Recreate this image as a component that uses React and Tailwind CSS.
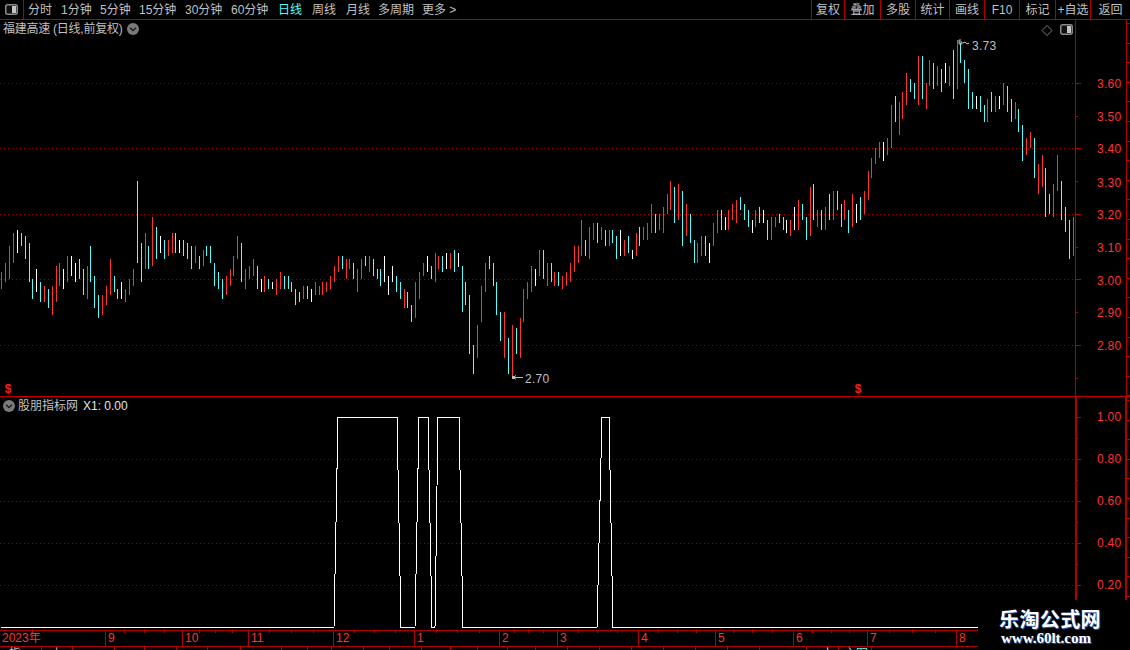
import React from 'react';

const RED = '#ff3232';
const CYAN = '#54fcfc';
const LINE = '#b00000';
const GRID = '#a00000';
const MUTED = '#c0c0c0';

// Bars per crop: [x, top, bottom, colour], in 3x coords from the origin given
const barSets = [
  { ox: 0, oy: 170, rows: [
    [4,306,357,'r'],[16,279,336,'r'],[28,228,327,'r'],[40,189,279,'r'],[52,180,249,'w'],[64,189,228,'c'],[76,198,267,'c'],[88,219,336,'c'],[97,327,387,'c'],[109,297,366,'w'],
    [121,336,396,'c'],[133,348,396,'r'],[145,357,414,'c'],[157,348,435,'r'],[169,288,396,'r'],[178,279,348,'r'],[190,297,357,'w'],[202,258,336,'r'],[214,258,318,'w'],[226,279,336,'w'],
    [238,267,327,'c'],[250,297,375,'c'],[262,288,387,'r'],[271,228,336,'c'],[283,318,414,'c'],[295,375,444,'c'],[307,375,435,'r'],[319,348,405,'r'],[331,267,375,'r'],[343,318,366,'c'],
    [352,357,387,'c'],[364,336,387,'w'],[376,357,396,'r'],[388,327,375,'r'],[400,297,348,'r'],[412,33,279,'c'],[424,219,336,'c'],[436,189,297,'r'],[445,228,297,'c'],[457,141,288,'r'],
    [469,171,267,'c'],[481,198,249,'w'],[493,210,267,'c'],[505,210,258,'r'],[517,189,249,'r'],[526,189,249,'c'],[538,210,249,'w'],[550,210,258,'c'],[562,219,267,'c'],[574,228,297,'c'],
    [586,228,279,'r'],[598,258,297,'c'],[610,240,288,'r'],[619,228,258,'c'],[631,228,279,'c'],[643,279,348,'c'],[655,306,357,'c'],[667,327,387,'c'],[679,318,375,'r'],[691,297,348,'r'],
    [700,258,318,'r'],[712,198,267,'r'],[724,219,336,'c'],[736,297,357,'r'],[748,288,327,'r'],[760,267,318,'r'],[772,288,357,'c'],[784,327,366,'w'],[793,318,366,'r'],[805,327,357,'c'],
    [817,336,357,'w'],[829,327,375,'r'],
  ] },
  { ox: 280, oy: 170, rows: [
    [1,306,357,'r'],[13,318,357,'c'],[25,318,357,'c'],[34,336,366,'c'],[46,357,405,'c'],[58,366,396,'c'],[70,348,387,'r'],[82,348,387,'c'],[94,357,396,'w'],[106,336,375,'r'],
    [118,348,375,'r'],[127,336,375,'r'],[139,336,366,'r'],[151,318,357,'r'],[163,288,336,'r'],[175,258,306,'r'],[187,258,297,'c'],[199,267,327,'r'],[208,267,297,'r'],[220,279,327,'c'],
    [232,297,366,'r'],[244,267,327,'r'],[256,258,288,'c'],[268,258,306,'r'],[280,267,318,'c'],[292,297,327,'c'],[301,297,348,'c'],[313,258,336,'w'],[325,318,375,'w'],[337,288,336,'w'],
    [349,318,366,'c'],[361,336,387,'c'],[373,357,414,'r'],[382,366,414,'c'],[394,405,456,'c'],[406,336,444,'r'],[418,306,387,'r'],[430,279,318,'r'],[442,258,306,'w'],[454,288,327,'c'],
    [466,249,336,'r'],[475,258,297,'r'],[487,258,306,'c'],[499,249,297,'w'],[511,249,297,'r'],[523,240,306,'c'],[535,249,291,'w'],[547,288,426,'c'],[556,336,405,'c'],[568,375,552,'c'],
    [580,525,612,'c'],[592,465,564,'r'],[604,348,456,'r'],[616,279,366,'r'],[628,258,297,'c'],[640,279,348,'c'],[649,336,435,'c'],[661,426,513,'c'],[673,426,564,'r'],[685,504,612,'c'],
    [697,465,622,'r'],[709,474,552,'c'],[721,444,564,'r'],[730,357,456,'r'],[742,336,387,'r'],[754,288,366,'r'],[766,297,348,'w'],[778,240,318,'r'],[790,240,327,'c'],[802,279,348,'r'],
    [814,279,336,'c'],[823,306,348,'r'],[835,306,348,'c'],
  ] },
  { ox: 555, oy: 215, rows: [[22,183,222,'r'],[34,171,213,'r'],[46,144,201,'r']] },
  { ox: 560, oy: 140, rows: [
    [43,318,396,'r'],[55,318,369,'r'],[64,240,348,'r'],[76,300,348,'c'],[88,261,357,'r'],[100,249,300,'r'],[112,249,309,'c'],[124,261,300,'r'],[136,270,318,'c'],[148,270,318,'r'],
    [157,270,309,'c'],[169,288,357,'c'],[181,270,348,'w'],[193,300,348,'r'],[205,288,339,'c'],[217,330,357,'w'],[229,279,348,'r'],[238,261,318,'c'],[250,261,300,'r'],[262,249,300,'r'],
    [274,192,279,'r'],[286,222,279,'c'],[298,222,270,'r'],[310,201,279,'r'],[322,162,222,'r'],[331,123,210,'r'],[343,141,249,'c'],[355,132,240,'r'],[367,153,318,'c'],[379,192,288,'r'],
    [391,222,309,'c'],[403,300,369,'c'],[412,309,369,'r'],[424,288,348,'r'],[436,288,348,'c'],[448,309,369,'w'],[460,249,318,'r'],[472,210,279,'r'],[484,210,270,'c'],[496,231,270,'w'],
    [505,210,270,'r'],[517,192,240,'r'],[529,180,249,'r'],[541,171,210,'c'],[553,192,240,'c'],[565,210,261,'c'],[577,240,279,'w'],[586,210,261,'r'],[598,201,249,'c'],[610,210,249,'w'],
    [622,240,300,'c'],[634,231,300,'r'],[646,231,261,'r'],[658,222,249,'c'],[670,231,270,'c'],[679,240,279,'w'],[691,240,288,'r'],[703,201,270,'w'],[715,180,270,'r'],[727,192,240,'c'],
    [739,231,300,'c'],[751,141,288,'r'],[760,132,240,'c'],[772,210,261,'r'],[784,210,270,'c'],[796,201,270,'r'],[808,162,240,'c'],[820,153,240,'r'],[832,153,210,'c'],[844,192,261,'c'],
    [853,180,240,'r'],[865,210,279,'c'],[877,162,261,'r'],[889,192,249,'w'],
  ] },
  { ox: 840, oy: 30, rows: [
    [61,501,570,'c'],[73,483,552,'r'],[85,423,510,'r'],[94,384,444,'r'],[106,354,402,'r'],[118,336,384,'r'],[130,336,393,'w'],[142,324,375,'r'],[154,225,354,'r'],[166,198,276,'c'],
    [178,216,315,'r'],[187,186,267,'r'],[199,129,225,'r'],[211,147,186,'c'],[223,159,207,'c'],[235,78,225,'r'],[247,78,207,'c'],[259,159,237,'r'],[268,90,168,'r'],[280,99,177,'c'],
    [292,108,168,'r'],[304,117,186,'c'],[316,99,159,'w'],[328,108,168,'r'],[340,60,207,'c'],[352,30,177,'r'],[361,39,99,'c'],[373,90,159,'c'],[385,117,237,'c'],[397,186,237,'c'],
    [409,198,237,'w'],[421,198,246,'c'],[433,225,276,'c'],[442,207,276,'r'],[454,186,246,'c'],[466,198,246,'r'],[478,198,237,'w'],[490,159,225,'r'],[502,168,246,'c'],[514,207,276,'c'],
    [526,216,267,'r'],[535,237,306,'c'],[547,285,393,'c'],[559,324,375,'r'],[571,306,354,'r'],[583,324,444,'c'],[595,402,492,'r'],[607,375,471,'r'],[616,414,561,'c'],[628,492,552,'c'],
    [640,462,561,'r'],[652,375,483,'r'],[664,453,570,'c'],[676,531,606,'c'],[688,570,687,'c'],[700,561,678,'r'],
  ] },
];

function barPath(code) {
  let d = '';
  barSets.forEach(({ ox, oy, rows }) => {
    rows.filter((row) => row[3] === code).forEach(([x, top, bottom]) => {
      d += `M${ox + Math.floor(x / 3) + 0.5} ${oy + Math.round(top / 3)}V${oy + Math.round(bottom / 3)}`;
    });
  });
  return d;
}

// 1px dots, 4px apart
function dotRow(y) {
  let d = '';
  for (let x = 0; x < 1075; x += 4) d += `M${x} ${y}h1v1h-1z`;
  return d;
}

const navTabs = [
  { label: '分时', width: 'w-[33px]' },
  { label: '1分钟', width: 'w-[39px]' },
  { label: '5分钟', width: 'w-[39px]' },
  { label: '15分钟', width: 'w-[46px]' },
  { label: '30分钟', width: 'w-[46px]' },
  { label: '60分钟', width: 'w-[47px]' },
  { label: '日线', width: 'w-[34px]', active: true },
  { label: '周线', width: 'w-[34px]' },
  { label: '月线', width: 'w-[32px]' },
  { label: '多周期', width: 'w-[44px]' },
  { label: '更多 >', width: 'w-[44px]' },
];

const toolButtons = [
  { label: '复权', width: 'w-[33px]' },
  { label: '叠加', width: 'w-[36px]' },
  { label: '多股', width: 'w-[35px]' },
  { label: '统计', width: 'w-[34px]' },
  { label: '画线', width: 'w-[35px]' },
  { label: 'F10', width: 'w-[35px]' },
  { label: '标记', width: 'w-[36px]' },
  { label: '+自选', width: 'w-[35px]' },
  { label: '返回', width: 'w-[40px]' },
];

const months = [
  { label: '2023年', width: 'w-[105px]' },
  { label: '9', width: 'w-[77px]' },
  { label: '10', width: 'w-[66px]' },
  { label: '11', width: 'w-[85px]' },
  { label: '12', width: 'w-[81px]' },
  { label: '1', width: 'w-[85px]' },
  { label: '2', width: 'w-[58px]' },
  { label: '3', width: 'w-[81px]' },
  { label: '4', width: 'w-[77px]' },
  { label: '5', width: 'w-[78px]' },
  { label: '6', width: 'w-[74px]' },
  { label: '7', width: 'w-[89px]' },
  { label: '8', width: 'w-[22px]' },
];

const monthTicks = [124, 144, 164, 199, 215, 232, 269, 291, 313, 354, 374, 395, 436, 457, 479, 514, 528, 543, 578, 597, 617, 658, 677, 696, 733, 752, 772, 812, 831, 849, 889, 912, 935];

const statusTabs = [
  { label: '指', width: 'w-[42px]' }, { label: '上', width: 'w-[31px]' }, { width: 'w-[42px]' }, { width: 'w-[30px]' },
  { width: 'w-[32px]' }, { width: 'w-[31px]' }, { width: 'w-[33px]' }, { width: 'w-[41px]' }, { width: 'w-[26px]' },
  { width: 'w-[24px]' }, { width: 'w-[32px]' }, { width: 'w-[26px]' }, { width: 'w-[32px]' }, { width: 'w-[29px]' },
  { width: 'w-[27px]' }, { width: 'w-[30px]' }, { width: 'w-[28px]' }, { width: 'w-[32px]' }, { width: 'w-[32px]' },
  { width: 'w-[32px]' }, { width: 'w-[32px]' }, { width: 'w-[32px]' }, { width: 'w-[32px]' }, { width: 'w-[32px]' },
  { width: 'w-[47px]' }, { label: '上', width: 'w-[32px]', tone: 'text-[#e0e0e0]', indent: 'pl-[15px]' },
  { label: '主图', width: 'w-[33px]', tone: 'text-[#54fcfc]', indent: 'pl-[5px]' },
];

function PanelIcon() {
  return (
    <svg width="13" height="11" viewBox="0 0 13 11">
      <rect x="0.75" y="0.75" width="11.5" height="9.5" rx="2" fill="#111" stroke="#8a8a8a" strokeWidth="1.5" />
      <rect x="7" y="2" width="4" height="7" fill="#c4c4c4" />
    </svg>
  );
}

function ChevronBadge() {
  return (
    <svg width="12" height="12" viewBox="0 0 12 12">
      <circle cx="6" cy="6" r="6" fill="#7a7a7a" />
      <path d="M3 4.8 6 7.6 9 4.8" fill="none" stroke="#1c1c1c" strokeWidth="1.4" />
    </svg>
  );
}

function AxisTicks({ majors, minors, top, bottom, heavy }) {
  const outer = [];
  for (let y = top + 3; y < bottom; y += 19.6) outer.push(Math.round(y));
  const rails = heavy ? `M1076 ${top}V${bottom}M1126 ${top}V${bottom}` : `M1075.5 ${top}V${bottom}M1126.5 ${top}V${bottom}`;
  return (
    <g shapeRendering="crispEdges" stroke={LINE}>
      <path d={rails} strokeWidth={heavy ? 2 : 1} />
      {majors.map((y) => <path key={y} d={`M1076 ${y + 0.5}H1081`} />)}
      {minors.map((y) => <path key={y} d={`M1076 ${y + 0.5}H1078`} />)}
      {outer.map((y) => <path key={y} d={`M1127 ${y + 0.5}H1130`} />)}
    </g>
  );
}

function GridLines({ rows }) {
  return (
    <g shapeRendering="crispEdges" fill={GRID}>
      {rows.map((y) => <path key={y} d={dotRow(y)} />)}
    </g>
  );
}

function AxisLabels({ labels }) {
  return (
    <g fill={RED} fontSize="12" fontFamily="'Liberation Sans', sans-serif">
      {labels.map(([y, text]) => <text key={text} x="1097" y={y} letterSpacing="0.3">{text}</text>)}
    </g>
  );
}

function PriceChart() {
  return (
    <svg width="1130" height="376" viewBox="0 20 1130 376" className="block">
      <GridLines rows={[83, 148, 214, 279, 345]} />
      <AxisTicks majors={[83, 148, 214, 279, 345]} minors={[116, 181, 247, 312, 378]} top={20} bottom={396} />
      <g shapeRendering="crispEdges" strokeWidth="1">
        <path d={barPath('r')} stroke={RED} />
        <path d={barPath('c')} stroke={CYAN} />
        <path d={barPath('w')} stroke="#ffffff" />
      </g>
      <AxisLabels labels={[[88, '3.60'], [121, '3.50'], [153, '3.40'], [187, '3.30'], [219, '3.20'], [252, '3.10'], [285, '3.00'], [317, '2.90'], [350, '2.80']]} />

      {/* low and high markers */}
      <path d="M513 377.5H523M513 377.5l3-2M513 377.5l3 2" fill="none" stroke={MUTED} />
      <rect x="512" y="376" width="2" height="3" fill={MUTED} />
      <path d="M961 40H959V44H962V42H959M963 43l2-1 2 2 2-1" fill="none" stroke={MUTED} />
      <g fill={MUTED} fontSize="12" fontFamily="'Liberation Sans', sans-serif">
        <text x="525" y="383" letterSpacing="0.3">2.70</text>
        <text x="972" y="50" letterSpacing="0.3">3.73</text>
      </g>

      {/* toolbar icons of the panel */}
      <path d="M1047 25.5 1052 30.5 1047 35.5 1042 30.5Z" fill="none" stroke="#808080" />
      <g transform="translate(1060 24)"><PanelIcon /></g>

      <g fill="#f02020" fontSize="12" fontWeight="700" fontFamily="'Liberation Sans', sans-serif" textAnchor="middle">
        <text x="8" y="393">$</text>
        <text x="858" y="393">$</text>
      </g>
    </svg>
  );
}

function IndicatorChart() {
  const points = '1,627 334,627 338,417 397,417 401,627 415,627 419,417 428,417 432,627 435,627 438,417 459,417 463,627 597,627 602,417 609,417 613,627 978,627';
  return (
    <svg width="1130" height="233" viewBox="0 397 1130 233" className="block">
      <GridLines rows={[459, 501, 543, 585]} />
      <AxisTicks majors={[417, 459, 501, 543, 585]} minors={[438, 480, 522, 564, 606]} top={397} bottom={630} heavy />
      <polyline points={points} fill="none" stroke="#ffffff" shapeRendering="crispEdges" />
      <AxisLabels labels={[[421, '1.00'], [463, '0.80'], [505, '0.60'], [547, '0.40'], [589, '0.20']]} />
    </svg>
  );
}

export default function App() {
  return (
    <div className="relative w-[1130px] h-[650px] overflow-hidden bg-black text-[12px] leading-[14px] text-[#c0c0c0] font-['Liberation_Sans','Noto_Sans_CJK_SC',sans-serif]">
      {/* Top toolbar */}
      <div className="flex h-[20px] border-b border-[#b00000]">
        <div className="flex w-[24px] items-center justify-center border-r border-[#b00000] pr-[1px]">
          <PanelIcon />
        </div>
        <div className="flex flex-1 items-center pl-[4px]">
          {navTabs.map((tab) => (
            <span key={tab.label} className={`${tab.width} whitespace-nowrap ${tab.active ? 'text-[#54fcfc]' : ''}`}>
              {tab.label}
            </span>
          ))}
        </div>
        <div className="flex">
          {toolButtons.map((btn) => (
            <span key={btn.label} className={`${btn.width} flex items-center justify-center whitespace-nowrap border-l border-[#b00000]`}>
              {btn.label}
            </span>
          ))}
        </div>
      </div>

      {/* Price panel */}
      <section className="relative border-b border-[#c00000]">
        <PriceChart />
        <div className="absolute left-[3px] top-[2px] flex items-center gap-[5px]">
          <span className="tracking-[-0.25px]">福建高速 (日线,前复权)</span>
          <ChevronBadge />
        </div>
      </section>

      {/* Indicator panel */}
      <section className="relative">
        <IndicatorChart />
        <div className="absolute left-[3px] top-[2px] flex items-center gap-[3px]">
          <ChevronBadge />
          <span>股朋指标网</span>
          <span className="ml-[2px] text-[#e4e4e4]">X1: 0.00</span>
        </div>
      </section>

      {/* Date axis */}
      <div className="relative flex h-[17px] w-[978px] border-y border-[#b00000] text-[#ff3232]">
        {months.map((month, i) => (
          <span key={month.label} className={`${month.width} whitespace-nowrap pl-[2px] ${i > 0 ? 'border-l border-[#b00000]' : ''}`}>
            {month.label}
          </span>
        ))}
        <svg width="978" height="3" className="absolute left-0 top-0">
          {monthTicks.map((x) => <rect key={x} x={x} y="0" width="1" height="2" fill="#b00000" />)}
        </svg>
      </div>

      {/* Cut off tab strip */}
      <div className="flex h-[3px] w-[978px] overflow-hidden">
        {statusTabs.map((tab, i) => (
          <span key={i} className={`${tab.width} ${tab.indent || 'pl-[9px]'} ${tab.tone || ''} shrink-0 whitespace-nowrap border-r border-[#b00000] leading-[14px]`}>
            {tab.label}
          </span>
        ))}
      </div>

      {/* Watermark */}
      <div className="absolute bottom-0 right-0 flex h-[50px] w-[152px] flex-col items-center bg-black pr-[8px] pt-[8px] text-white">
        <span className="font-['Noto_Sans_CJK_SC',sans-serif] text-[20px] font-bold leading-[21px] tracking-[0.4px] [text-shadow:1px_1px_1px_#2f5fb0]">
          乐淘公式网
        </span>
        <span className="mt-[2px] mr-[8px] font-['Liberation_Serif',serif] text-[15px] font-bold leading-[14px] [text-shadow:1px_1px_1px_#2f5fb0]">
          www.60lt.com
        </span>
      </div>
    </div>
  );
}
